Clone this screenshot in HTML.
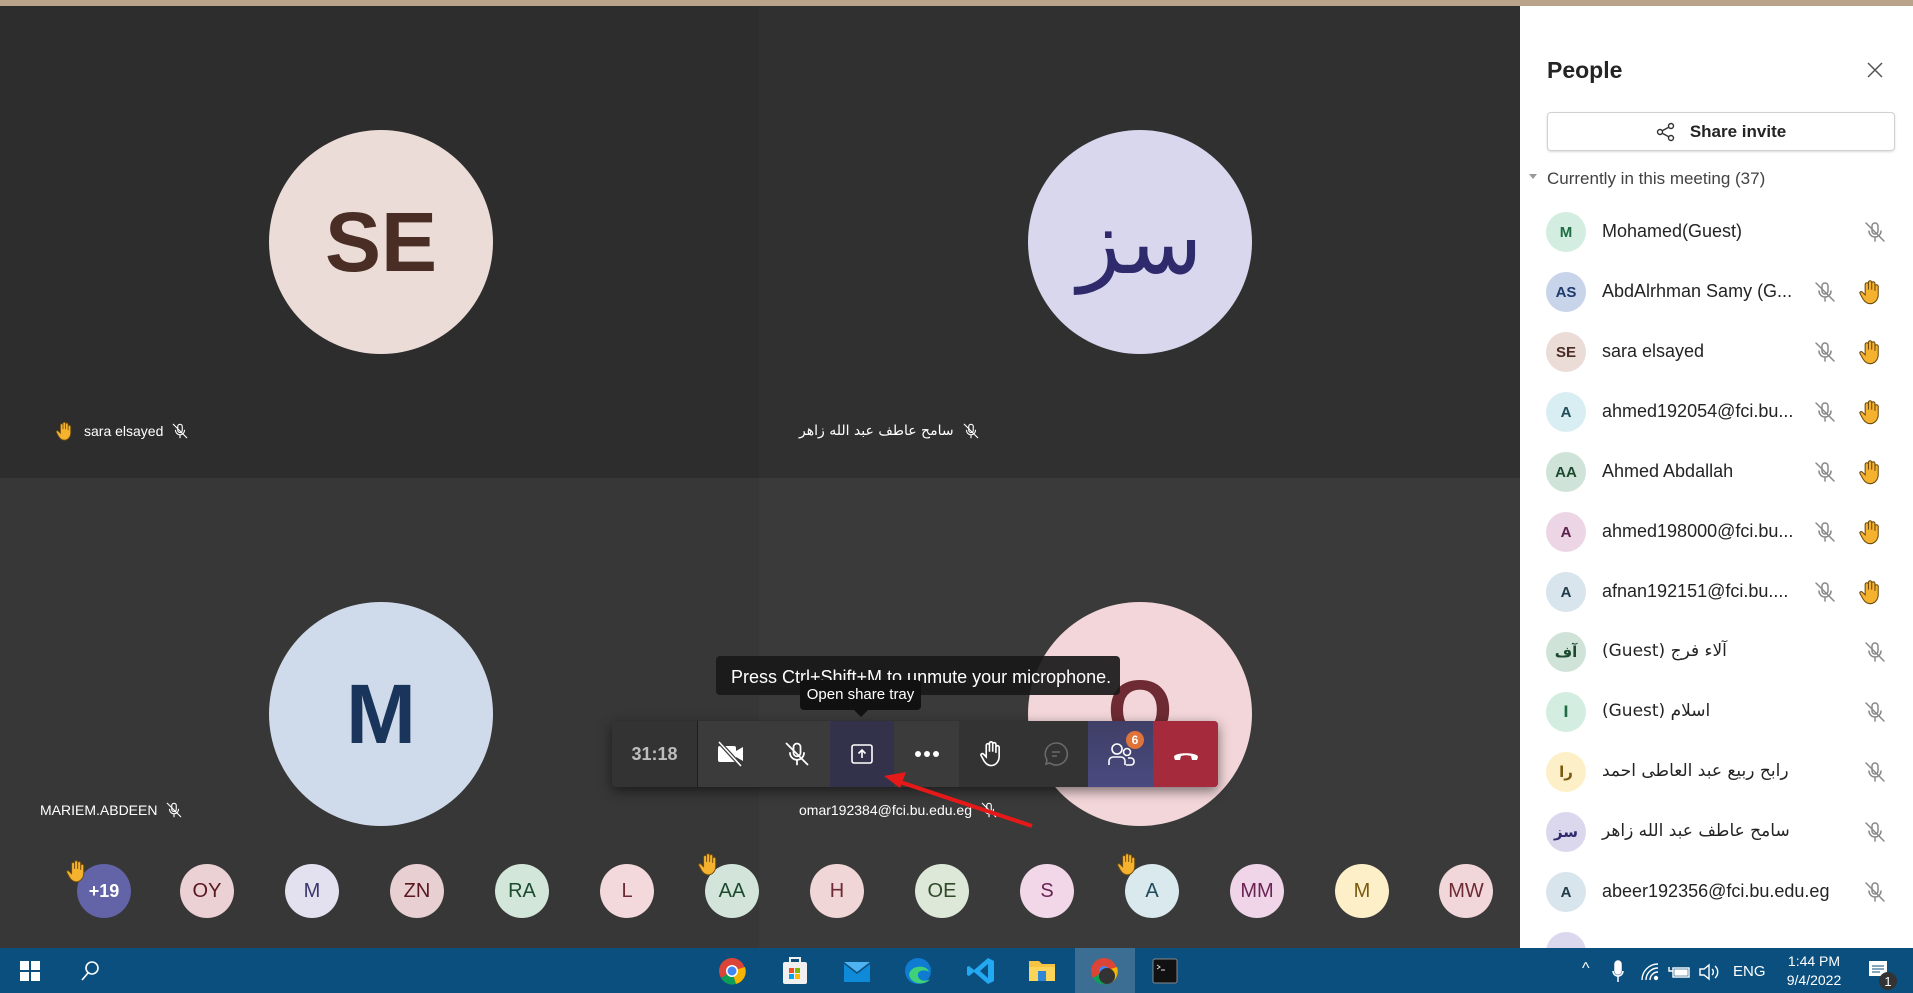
<!DOCTYPE html>
<html><head><meta charset="utf-8">
<style>
*{margin:0;padding:0;box-sizing:border-box}
body{width:1913px;height:993px;overflow:hidden;position:relative;background:#2b2b2b;font-family:"Liberation Sans","DejaVu Sans",sans-serif}
.abs{position:absolute}
.circ{position:absolute;border-radius:50%;display:flex;align-items:center;justify-content:center}
.lbl{position:absolute;color:#fff;font-size:14px;display:flex;align-items:center;gap:8px}
.row{position:absolute;left:1520px;width:393px;height:60px}
.row .av{position:absolute;left:26px;top:10px;width:40px;height:40px;border-radius:50%;display:flex;align-items:center;justify-content:center;font-size:15px;font-weight:bold}
.row .nm{position:absolute;left:82px;top:19px;font-size:18px;color:#242424;white-space:nowrap}
.row .mic{position:absolute;top:18px}
.row .hand{position:absolute;left:337px;top:16px}
.tb{position:absolute;top:721px;height:66px;display:flex;align-items:center;justify-content:center}
.ba{position:absolute;top:864px;width:54px;height:54px;border-radius:50%;display:flex;align-items:center;justify-content:center;font-size:20px}
.ti{position:absolute;top:957px}
</style></head><body>
<svg width="0" height="0" style="position:absolute">
<defs>
<symbol id="micoff" viewBox="0 0 24 24"><g fill="none" stroke="currentColor" stroke-width="1.5" stroke-linecap="round"><rect x="9" y="3" width="6" height="11" rx="3"/><path d="M6 11a6 6 0 0 0 12 0M12 17v4M3 3l18 18"/></g></symbol>
<symbol id="hand" viewBox="0 0 24 24"><path d="M7 11V5.5a1.4 1.4 0 0 1 2.8 0V10V3.8a1.4 1.4 0 0 1 2.8 0V10V4.6a1.4 1.4 0 0 1 2.8 0V11V7.2a1.4 1.4 0 0 1 2.8 0V14c0 4.5-3 8-7 8-3 0-4.6-1.6-6.2-4.2L2.6 13.4c-.7-1.2.9-2.4 1.9-1.4L7 14.5z" fill="#f4b22e" stroke="#6b4a10" stroke-width=".9"/></symbol>
</defs></svg>

<!-- top strip -->
<div class="abs" style="left:0;top:0;width:1913px;height:6px;background:#b9a38a"></div>
<!-- tiles -->
<div class="abs" style="left:0;top:6px;width:759px;height:472px;background:#2d2d2d"></div>
<div class="abs" style="left:759px;top:6px;width:761px;height:472px;background:#303030"></div>
<div class="abs" style="left:0;top:478px;width:759px;height:470px;background:#373737"></div>
<div class="abs" style="left:759px;top:478px;width:761px;height:470px;background:#3a3a3a"></div>

<div class="circ" style="left:269px;top:130px;width:224px;height:224px;background:#ebdcd7;color:#4a2e25;font-size:84px;font-weight:bold">SE</div>
<div class="circ" style="left:1028px;top:130px;width:224px;height:224px;background:#d9d7ee;color:#2e2a6b;font-size:90px;font-family:'DejaVu Sans',sans-serif">سز</div>
<div class="circ" style="left:269px;top:602px;width:224px;height:224px;background:#cfdbea;color:#1a355c;font-size:84px;font-weight:bold">M</div>
<div class="circ" style="left:1028px;top:602px;width:224px;height:224px;background:#f2d6d9;color:#6e2b33;font-size:84px;font-weight:bold;align-items:flex-start;padding-top:60px">O</div>

<div class="lbl" style="left:54px;top:420px"><svg width="22" height="22"><use href="#hand"/></svg>sara elsayed <svg width="18" height="18" style="color:#fff"><use href="#micoff"/></svg></div>
<div class="lbl" style="left:799px;top:422px;font-family:'DejaVu Sans',sans-serif">سامح عاطف عبد الله زاهر <svg width="18" height="18" style="color:#fff"><use href="#micoff"/></svg></div>
<div class="lbl" style="left:40px;top:801px">MARIEM.ABDEEN <svg width="18" height="18" style="color:#fff"><use href="#micoff"/></svg></div>
<div class="lbl" style="left:799px;top:801px">omar192384@fci.bu.edu.eg <svg width="18" height="18" style="color:#fff"><use href="#micoff"/></svg></div>

<!-- bottom avatars -->
<div class="ba" style="left:77px;background:#6264a7;color:#fff;font-weight:bold;font-size:18px">+19</div>
<div class="ba" style="left:180px;background:#ebd1d3;color:#5a1720">OY</div>
<div class="ba" style="left:285px;background:#e3e0f0;color:#3c376b">M</div>
<div class="ba" style="left:390px;background:#e8cfd1;color:#5a1720">ZN</div>
<div class="ba" style="left:495px;background:#d3e6da;color:#1b4a2f">RA</div>
<div class="ba" style="left:600px;background:#f3d9dc;color:#6e2b33">L</div>
<div class="ba" style="left:705px;background:#d3e5da;color:#1b4a2f">AA</div>
<div class="ba" style="left:810px;background:#f1d6d8;color:#6e2b33">H</div>
<div class="ba" style="left:915px;background:#dde8d9;color:#2f4a28">OE</div>
<div class="ba" style="left:1020px;background:#f2d7e8;color:#6a2455">S</div>
<div class="ba" style="left:1125px;background:#d9e9ee;color:#1f4a58">A</div>
<div class="ba" style="left:1230px;background:#efd5e7;color:#6a2455">MM</div>
<div class="ba" style="left:1335px;background:#fdf0c8;color:#7a5a10">M</div>
<div class="ba" style="left:1439px;background:#f1d6da;color:#6e2b33">MW</div>
<svg class="abs" style="left:64px;top:858px" width="26" height="26"><use href="#hand"/></svg>
<svg class="abs" style="left:696px;top:851px" width="26" height="26"><use href="#hand"/></svg>
<svg class="abs" style="left:1115px;top:851px" width="26" height="26"><use href="#hand"/></svg>

<!-- toolbar -->
<div class="abs" style="left:612px;top:721px;width:606px;height:66px;background:#3b3b3b;border-radius:4px;box-shadow:0 4px 12px rgba(0,0,0,.5)"></div>
<div class="tb" style="left:612px;width:86px;background:#333;color:#bdbdbd;font-weight:bold;font-size:18px;border-radius:4px 0 0 4px;border-right:1px solid #1e1e1e">31:18</div>
<div class="tb" style="left:698px;width:65px"><svg width="32" height="28" viewBox="0 0 32 28"><rect x="3" y="6" width="18" height="16" rx="2" fill="#fff"/><path d="M21 11l7-4v14l-7-4z" fill="#fff"/><path d="M4 2l22 24" stroke="#3b3b3b" stroke-width="4"/><path d="M4 2l22 24" stroke="#fff" stroke-width="1.6"/></svg></div>
<div class="tb" style="left:763px;width:67px;color:#fff"><svg width="28" height="28"><use href="#micoff"/></svg></div>
<div class="tb" style="left:830px;width:64px;background:#32334a"><svg width="28" height="28" viewBox="0 0 28 28" fill="none" stroke="#fff" stroke-width="1.6"><rect x="4" y="5" width="20" height="18" rx="2"/><path d="M14 18V10M10.5 13.5L14 10l3.5 3.5"/></svg></div>
<div class="tb" style="left:894px;width:65px;color:#fff;font-size:26px;letter-spacing:-1px"><svg width="26" height="8"><circle cx="4" cy="4" r="3" fill="#fff"/><circle cx="13" cy="4" r="3" fill="#fff"/><circle cx="22" cy="4" r="3" fill="#fff"/></svg></div>
<div class="tb" style="left:959px;width:65px;background:#333"><svg width="28" height="30" viewBox="0 0 24 26" fill="none" stroke="#fff" stroke-width="1.4"><path d="M7 12V5.5a1.4 1.4 0 0 1 2.8 0V11V3.8a1.4 1.4 0 0 1 2.8 0V11V4.6a1.4 1.4 0 0 1 2.8 0V12V7.2a1.4 1.4 0 0 1 2.8 0V15c0 4.5-3 8-7 8-3 0-4.6-1.6-6.2-4.2L2.6 14.4c-.7-1.2.9-2.4 1.9-1.4L7 15.5z"/></svg></div>
<div class="tb" style="left:1024px;width:64px;background:#333"><svg width="28" height="28" viewBox="0 0 28 28" fill="none" stroke="#6a6a6a" stroke-width="1.6"><path d="M14 3a11 11 0 1 1-6 20l-4 1 1-4A11 11 0 0 1 14 3z"/><path d="M10 12h8M10 16h5"/></svg></div>
<div class="tb" style="left:1088px;width:65px;background:linear-gradient(#3f3f66,#4a4a80)"><svg width="32" height="30" viewBox="0 0 32 30" fill="none" stroke="#fff" stroke-width="1.6"><circle cx="12" cy="10" r="5"/><path d="M4 26v-4a4 4 0 0 1 4-4h8a4 4 0 0 1 4 4v4"/><circle cx="22" cy="13" r="3.5"/><path d="M21 26h5a3 3 0 0 0 3-3v-1a3 3 0 0 0-3-3h-3"/></svg></div>
<div class="circ" style="left:1126px;top:731px;width:18px;height:18px;background:#e0733a;color:#fff;font-size:12px;font-weight:bold">6</div>
<div class="tb" style="left:1153px;width:65px;background:#a52a3c;border-radius:0 4px 4px 0"><svg width="28" height="14" viewBox="0 0 28 14"><path d="M2 10c0-5 24-5 24 0l-1 3h-5l-1-4c-4-1-6-1-10 0l-1 4H3z" fill="#fff"/></svg></div>

<!-- tooltips -->
<div class="abs" style="left:716px;top:656px;width:404px;height:39px;background:rgba(25,25,25,.92);border-radius:4px;color:#fff;font-size:18px;padding:11px 0 0 15px;white-space:nowrap">Press Ctrl+Shift+M to unmute your microphone.</div>
<div class="abs" style="left:800px;top:680px;width:121px;height:30px;background:#111;border-radius:4px;color:#fff;font-size:15px;text-align:center;line-height:30px">Open share tray</div>
<div class="abs" style="left:854px;top:710px;width:0;height:0;border-left:7px solid transparent;border-right:7px solid transparent;border-top:7px solid #111"></div>

<!-- red arrow -->
<svg class="abs" style="left:0;top:0" width="1520" height="948"><line x1="1032" y1="826" x2="897" y2="781" stroke="#e61919" stroke-width="4"/><path d="M884 776l22-4-6 16z" fill="#e61919"/></svg>

<!-- People panel -->
<div class="abs" style="left:1520px;top:6px;width:393px;height:942px;background:#fff"></div>
<div class="abs" style="left:1547px;top:57px;font-size:23px;font-weight:bold;color:#242424">People</div>
<svg class="abs" style="left:1866px;top:61px" width="18" height="18"><path d="M2 2l14 14M16 2L2 16" stroke="#555" stroke-width="1.5"/></svg>
<div class="abs" style="left:1547px;top:112px;width:348px;height:39px;border:1px solid #d1d1d1;border-radius:4px;box-shadow:0 1px 2px rgba(0,0,0,.15);display:flex;align-items:center;justify-content:center;gap:14px;font-size:17px;font-weight:bold;color:#242424"><svg width="20" height="20" viewBox="0 0 20 20" fill="none" stroke="#333" stroke-width="1.4"><circle cx="4" cy="10" r="2.5"/><circle cx="15" cy="4" r="2.5"/><circle cx="15" cy="16" r="2.5"/><path d="M6.2 8.8l6.6-3.6M6.2 11.2l6.6 3.6"/></svg>Share invite</div>
<div class="abs" style="left:1529px;top:174px;width:0;height:0;border-left:4px solid transparent;border-right:4px solid transparent;border-top:5px solid #999"></div>
<div class="abs" style="left:1547px;top:169px;font-size:17px;color:#424242">Currently in this meeting (37)</div>

<div class="row" style="top:202px"><div class="av" style="background:#d3ede0;color:#1f6b44">M</div><div class="nm">Mohamed(Guest)</div><svg class="mic" style="left:343px;color:#888" width="24" height="24"><use href="#micoff"/></svg></div>
<div class="row" style="top:262px"><div class="av" style="background:#c8d4ea;color:#1d3a6b">AS</div><div class="nm">AbdAlrhman Samy (G...</div><svg class="mic" style="left:293px;color:#888" width="24" height="24"><use href="#micoff"/></svg><svg class="hand" width="28" height="28"><use href="#hand"/></svg></div>
<div class="row" style="top:322px"><div class="av" style="background:#ebdcd8;color:#4a2e25">SE</div><div class="nm">sara elsayed</div><svg class="mic" style="left:293px;color:#888" width="24" height="24"><use href="#micoff"/></svg><svg class="hand" width="28" height="28"><use href="#hand"/></svg></div>
<div class="row" style="top:382px"><div class="av" style="background:#d9eef2;color:#1f4a58">A</div><div class="nm">ahmed192054@fci.bu...</div><svg class="mic" style="left:293px;color:#888" width="24" height="24"><use href="#micoff"/></svg><svg class="hand" width="28" height="28"><use href="#hand"/></svg></div>
<div class="row" style="top:442px"><div class="av" style="background:#cfe3d8;color:#1b4a2f">AA</div><div class="nm">Ahmed Abdallah</div><svg class="mic" style="left:293px;color:#888" width="24" height="24"><use href="#micoff"/></svg><svg class="hand" width="28" height="28"><use href="#hand"/></svg></div>
<div class="row" style="top:502px"><div class="av" style="background:#ecd6e6;color:#5a1f48">A</div><div class="nm">ahmed198000@fci.bu...</div><svg class="mic" style="left:293px;color:#888" width="24" height="24"><use href="#micoff"/></svg><svg class="hand" width="28" height="28"><use href="#hand"/></svg></div>
<div class="row" style="top:562px"><div class="av" style="background:#d8e5ec;color:#1f3a48">A</div><div class="nm">afnan192151@fci.bu....</div><svg class="mic" style="left:293px;color:#888" width="24" height="24"><use href="#micoff"/></svg><svg class="hand" width="28" height="28"><use href="#hand"/></svg></div>
<div class="row" style="top:622px"><div class="av" style="background:#d0e3d8;color:#1b4a2f;font-family:'DejaVu Sans',sans-serif">آف</div><div class="nm" style="font-family:'DejaVu Sans',sans-serif;font-size:17px">(Guest) آلاء فرج</div><svg class="mic" style="left:343px;color:#888" width="24" height="24"><use href="#micoff"/></svg></div>
<div class="row" style="top:682px"><div class="av" style="background:#d3ede0;color:#1f6b44">ا</div><div class="nm" style="font-family:'DejaVu Sans',sans-serif;font-size:17px">(Guest) اسلام</div><svg class="mic" style="left:343px;color:#888" width="24" height="24"><use href="#micoff"/></svg></div>
<div class="row" style="top:742px"><div class="av" style="background:#fdf0c8;color:#7a5a10;font-family:'DejaVu Sans',sans-serif">را</div><div class="nm" style="font-family:'DejaVu Sans',sans-serif;font-size:17px">رابح ربيع عبد العاطى احمد</div><svg class="mic" style="left:343px;color:#888" width="24" height="24"><use href="#micoff"/></svg></div>
<div class="row" style="top:802px"><div class="av" style="background:#dbd8ee;color:#2e2a6b;font-family:'DejaVu Sans',sans-serif">سز</div><div class="nm" style="font-family:'DejaVu Sans',sans-serif;font-size:17px">سامح عاطف عبد الله زاهر</div><svg class="mic" style="left:343px;color:#888" width="24" height="24"><use href="#micoff"/></svg></div>
<div class="row" style="top:862px"><div class="av" style="background:#d8e5ec;color:#1f3a48">A</div><div class="nm">abeer192356@fci.bu.edu.eg</div><svg class="mic" style="left:343px;color:#888" width="24" height="24"><use href="#micoff"/></svg></div>
<div class="row" style="top:922px;height:26px;overflow:hidden"><div class="av" style="background:#dbd8ee"></div></div>

<!-- taskbar -->
<div class="abs" style="left:0;top:948px;width:1913px;height:45px;background:#0a4f7e"></div>
<svg class="ti" style="left:20px;top:961px" width="20" height="20"><rect x="0" y="0" width="9" height="9" fill="#fff"/><rect x="11" y="0" width="9" height="9" fill="#fff"/><rect x="0" y="11" width="9" height="9" fill="#fff"/><rect x="11" y="11" width="9" height="9" fill="#fff"/></svg>
<svg class="ti" style="left:80px;top:960px" width="20" height="22" fill="none" stroke="#fff" stroke-width="1.6"><circle cx="12" cy="8" r="6"/><path d="M8 13l-6 7"/></svg>
<div class="abs" style="left:1075px;top:948px;width:60px;height:45px;background:#3b6e92"></div>
<svg class="ti" style="left:718px;top:957px" width="28" height="28" viewBox="0 0 28 28"><circle cx="14" cy="14" r="13" fill="#db4437"/><path d="M14 14L3 21A13 13 0 0 0 18 27z" fill="#0f9d58"/><path d="M14 14l13-4A13 13 0 0 1 18 27z" fill="#f4b400"/><circle cx="14" cy="14" r="6" fill="#fff"/><circle cx="14" cy="14" r="4.5" fill="#4285f4"/></svg>
<svg class="ti" style="left:782px;top:956px" width="26" height="30"><rect x="1" y="6" width="24" height="22" rx="2" fill="#f0f0f0"/><rect x="7" y="12" width="5" height="5" fill="#f25022"/><rect x="13" y="12" width="5" height="5" fill="#7fba00"/><rect x="7" y="18" width="5" height="5" fill="#00a4ef"/><rect x="13" y="18" width="5" height="5" fill="#ffb900"/><path d="M8 6V2h10v4" stroke="#f0f0f0" stroke-width="2" fill="none"/></svg>
<svg class="ti" style="left:842px;top:958px" width="30" height="26"><path d="M2 6l13 10 13-10v18H2z" fill="#0e8ad8"/><path d="M2 4h26l-13 10z" fill="#4fb3f2"/></svg>
<svg class="ti" style="left:903px;top:956px" width="30" height="30" viewBox="0 0 30 30"><circle cx="15" cy="15" r="13" fill="#0f7bd1"/><path d="M6 18c2-9 18-10 20-2-4-3-12-2-11 4 1 5 8 6 12 3-4 7-20 6-21-5z" fill="#3fd07a"/></svg>
<svg class="ti" style="left:966px;top:956px" width="30" height="30"><path d="M22 2l6 3v20l-6 3L8 16l-5 4-2-1V11l2-1 5 4zM22 8l-8 7 8 7z" fill="#23a9f2"/></svg>
<svg class="ti" style="left:1028px;top:957px" width="28" height="26"><path d="M1 4h10l3 3h13v17H1z" fill="#f6c343"/><rect x="1" y="10" width="26" height="14" fill="#fbd45a"/><rect x="10" y="14" width="8" height="10" fill="#2e86d6"/></svg>
<svg class="ti" style="left:1090px;top:956px" width="28" height="30" viewBox="0 0 28 28"><circle cx="14" cy="14" r="13" fill="#db4437"/><path d="M14 14L3 21A13 13 0 0 0 18 27z" fill="#0f9d58"/><path d="M14 14l13-4A13 13 0 0 1 18 27z" fill="#f4b400"/><circle cx="14" cy="14" r="5" fill="#4285f4"/><circle cx="17" cy="19" r="8" fill="#333"/></svg>
<svg class="ti" style="left:1152px;top:958px" width="26" height="26"><rect x="1" y="1" width="24" height="24" rx="2" fill="#111" stroke="#888"/><path d="M5 7l3 2-3 2M9 12h4" stroke="#ddd" stroke-width="1"/></svg>
<div class="abs" style="left:1582px;top:960px;color:#fff;font-size:16px">^</div>
<svg class="abs" style="left:1611px;top:960px" width="14" height="24" fill="none" stroke="#fff" stroke-width="1.5"><rect x="4" y="1" width="6" height="13" rx="3" fill="#fff"/><path d="M2 11a5 5 0 0 0 10 0M7 16v6"/></svg>
<svg class="abs" style="left:1640px;top:962px" width="20" height="20" fill="none" stroke="#fff" stroke-width="1.4"><path d="M2 18A16 16 0 0 1 18 2M6 18A12 12 0 0 1 18 6M10 18a8 8 0 0 1 8-8"/><circle cx="16" cy="16" r="1.5" fill="#fff"/></svg>
<svg class="abs" style="left:1668px;top:964px" width="24" height="16" fill="none" stroke="#fff" stroke-width="1.4"><rect x="5" y="4" width="16" height="9"/><rect x="7" y="6" width="12" height="5" fill="#fff"/><path d="M1 3v4h4"/></svg>
<svg class="abs" style="left:1698px;top:962px" width="24" height="20" fill="none" stroke="#fff" stroke-width="1.4"><path d="M2 7h4l5-4v14l-5-4H2z"/><path d="M14 7a4 4 0 0 1 0 6M17 4a8 8 0 0 1 0 12"/></svg>
<div class="abs" style="left:1733px;top:963px;color:#fff;font-size:15px">ENG</div>
<div class="abs" style="left:1784px;top:952px;color:#fff;font-size:14px;text-align:center;line-height:19px;width:60px">1:44 PM<br>9/4/2022</div>
<svg class="abs" style="left:1866px;top:959px" width="34" height="32"><rect x="3" y="2" width="18" height="15" fill="#fff"/><path d="M6 7h12M6 10h12M6 13h8" stroke="#0a4f7e"/><circle cx="22" cy="22" r="9" fill="#333"/><text x="22" y="27" fill="#fff" font-size="13" text-anchor="middle" font-family="Liberation Sans">1</text></svg>
</body></html>
